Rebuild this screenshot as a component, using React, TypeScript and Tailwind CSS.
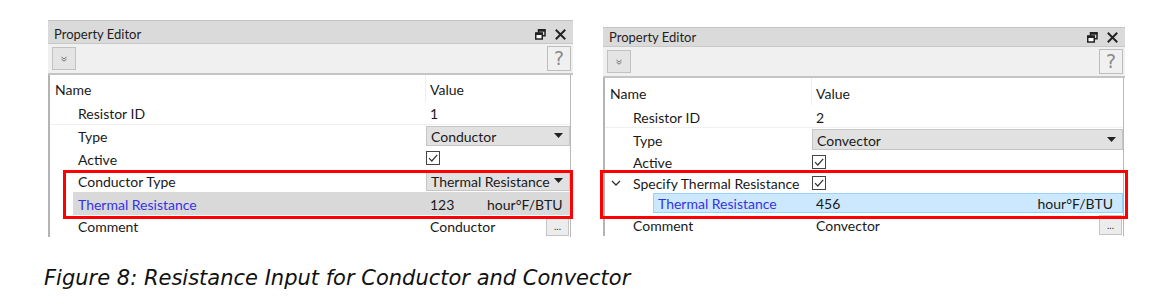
import React from "react";

const font = { fontFamily: "Lato, 'Noto Sans', sans-serif" };

function RestoreIcon() {
  return (
    <svg width="11" height="11" viewBox="0 0 11 11">
      <rect x="3.5" y="0.75" width="6.5" height="6" fill="none" stroke="#222" strokeWidth="1.5" />
      <rect x="3.5" y="0.5" width="7" height="2.2" fill="#222" />
      <rect x="0.75" y="4" width="6.5" height="6" fill="#fff" stroke="#222" strokeWidth="1.5" />
      <rect x="0.5" y="3.8" width="7" height="2.2" fill="#222" />
    </svg>
  );
}

function CloseIcon() {
  return (
    <svg width="11" height="11" viewBox="0 0 11 11">
      <path d="M1.5 1.5 L9.5 9.5 M9.5 1.5 L1.5 9.5" stroke="#222" strokeWidth="2" strokeLinecap="square" />
    </svg>
  );
}

function Check() {
  return (
    <div className="w-[14px] h-[14px] border border-[#444] bg-white flex items-center justify-center">
      <svg width="12" height="12" viewBox="0 0 12 12">
        <path d="M2 6.2 L4.8 9 L10.2 2.8" fill="none" stroke="#333" strokeWidth="1.2" />
      </svg>
    </div>
  );
}

function Combo({ text }: { text: string }) {
  return (
    <div className="flex-1 h-full flex items-center justify-between bg-[#e1e1e1] border border-[#c6c6c6] pl-[4px] pr-[6px] text-[#1a1a1a]">
      <span className="pt-[1px]">{text}</span>
      <svg width="9" height="5" viewBox="0 0 9 5">
        <path d="M0 0 L9 0 L4.5 5 Z" fill="#222" />
      </svg>
    </div>
  );
}

function DotsBtn() {
  return (
    <div className="w-[23px] h-[20px] border border-[#c4c4c4] bg-[#ececec] flex items-end justify-center pb-[4px] text-[10px] leading-none text-[#333]">
      ...
    </div>
  );
}

function TitleBar({ tall }: { tall?: boolean }) {
  return (
    <>
      <div
        className={
          tall
            ? "h-[24px] pt-[5px] bg-[#dadada] border-t border-[#c4c4c4] border-b border-b-[#c8c8c8] flex items-center justify-between pl-[6px] pr-[7px] text-[13px] text-[#1e1e1e]"
            : "h-[20px] bg-[#dadada] border-t border-[#c4c4c4] border-b border-b-[#c8c8c8] flex items-center justify-between pl-[6px] pr-[7px] text-[13px] text-[#1e1e1e]"
        }
      >
        <span className="pt-[1px]">Property Editor</span>
        <div className="flex items-center gap-[9px]">
          <RestoreIcon />
          <CloseIcon />
        </div>
      </div>
      <div className="h-[31px] bg-[#f0f0f0] flex items-center justify-between pl-[4px] pr-[2px] border-b-2 border-[#c4c4c4]">
        <div className="w-[24px] h-[23px] bg-[#e4e4e4] border border-[#c2c2c2] flex items-center justify-center">
          <svg width="6" height="6" viewBox="0 0 6 6">
            <path d="M0.5 1 L3 3 L5.5 1 M0.5 3.2 L3 5.2 L5.5 3.2" fill="none" stroke="#666" strokeWidth="0.9" />
          </svg>
        </div>
        <div
          className="w-[24px] h-[25px] bg-[#f0f0f0] border border-[#bdbdbd] flex items-center justify-center text-[19px] leading-none text-[#8a8a8a]"
          style={{ fontFamily: "'DejaVu Sans', sans-serif" }}
        >
          ?
        </div>
      </div>
    </>
  );
}

function Cell({ w, pl, children }: { w: string; pl: string; children: React.ReactNode }) {
  return <div className={`${w} ${pl} flex items-center pt-[2px]`}>{children}</div>;
}

function LeftPanel() {
  return (
    <div className="w-[525px] relative text-[14px] text-[#1a1a1a]" style={font}>
      <TitleBar tall />
      <div className="flex flex-col border-l-[2px] border-[#b4b4b4] border-r border-r-[#b8b8b8] mr-[2px] bg-white">
        <div className="h-[27px] flex">
          <div className="w-[376px] pl-[5px] pt-[2px] flex items-center border-r border-[#efefef]">Name</div>
          <div className="flex-1 pl-[4px] pt-[2px] flex items-center">Value</div>
        </div>
        <div className="h-[22.5px] flex border-b border-[#f0f0f0]">
          <Cell w="w-[376px]" pl="pl-[28px]">Resistor ID</Cell>
          <div className="flex-1 pl-[4px] pt-[2px] flex items-center">1</div>
        </div>
        <div className="h-[22.5px] flex">
          <Cell w="w-[376px]" pl="pl-[28px]">Type</Cell>
          <div className="flex-1 flex items-center py-[1px]"><Combo text="Conductor" /></div>
        </div>
        <div className="h-[22.5px] flex">
          <Cell w="w-[376px]" pl="pl-[28px]">Active</Cell>
          <div className="flex-1 flex items-center"><Check /></div>
        </div>
        <div className="h-[22.5px] flex">
          <Cell w="w-[376px]" pl="pl-[28px]">Conductor Type</Cell>
          <div className="flex-1 flex items-center py-[1px]"><Combo text="Thermal Resistance" /></div>
        </div>
        <div className="h-[22.5px] flex pl-[23px]">
          <div className="flex-1 flex bg-[#d9d9d9]">
            <div className="w-[353px] pl-[5px] pt-[2px] flex items-center text-[#3434e6]">Thermal Resistance</div>
            <div className="flex-1 pl-[4px] pt-[2px] flex items-center">
              <span className="w-[57px]">123</span>
              <span>hour°F/BTU</span>
            </div>
          </div>
        </div>
        <div className="h-[22.5px] flex">
          <Cell w="w-[376px]" pl="pl-[28px]">Comment</Cell>
          <div className="flex-1 pl-[4px] flex items-center justify-between pr-[1px]">
            <span className="pt-[2px]">Conductor</span>
            <DotsBtn />
          </div>
        </div>
      </div>
      <div className="absolute left-[15px] top-[150px] w-[510px] h-[49px] border-[3px] border-[#ff0000] pointer-events-none" />
    </div>
  );
}

function RightPanel() {
  return (
    <div className="w-[522px] relative text-[14px] text-[#1a1a1a]" style={font}>
      <TitleBar />
      <div className="flex flex-col border-l-[2px] border-[#b4b4b4] border-r border-r-[#b8b8b8] mr-[1px] bg-white">
        <div className="h-[27px] flex">
          <div className="w-[207px] pl-[5px] pt-[3px] flex items-center border-r border-[#efefef]">Name</div>
          <div className="flex-1 pl-[4px] pt-[3px] flex items-center">Value</div>
        </div>
        <div className="h-[23px] flex border-b border-[#f0f0f0]">
          <Cell w="w-[207px]" pl="pl-[28px]">Resistor ID</Cell>
          <div className="flex-1 pl-[4px] pt-[2px] flex items-center">2</div>
        </div>
        <div className="h-[23px] flex">
          <Cell w="w-[207px]" pl="pl-[28px]">Type</Cell>
          <div className="flex-1 flex items-center py-[1px]"><Combo text="Convector" /></div>
        </div>
        <div className="h-[22px] flex">
          <div className="w-[207px] pl-[28px] flex items-center pt-[1px]">Active</div>
          <div className="flex-1 flex items-center"><Check /></div>
        </div>
        <div className="h-[20px] flex">
          <div className="w-[207px] pl-[6px] flex items-center">
            <svg width="10" height="6" viewBox="0 0 10 6" className="mr-[12px]">
              <path d="M1 1 L5 5 L9 1" fill="none" stroke="#333" strokeWidth="1.3" />
            </svg>
            <span>Specify Thermal Resistance</span>
          </div>
          <div className="flex-1 flex items-center"><Check /></div>
        </div>
        <div className="h-[20px] flex pl-[48px]">
          <div className="flex-1 flex bg-[#cce8ff] border border-[#99d1ff]">
            <div className="w-[158px] pl-[4px] pt-[1px] flex items-center text-[#3434e6]">Thermal Resistance</div>
            <div className="flex-1 pl-[4px] pr-[9px] pt-[1px] flex items-center justify-between">
              <span>456</span>
              <span>hour°F/BTU</span>
            </div>
          </div>
        </div>
        <div className="h-[23px] flex">
          <div className="w-[207px] pl-[28px] flex items-center pt-[1px]">Comment</div>
          <div className="flex-1 pl-[4px] flex items-center justify-between pr-[1px]">
            <span className="pt-[1px]">Convector</span>
            <DotsBtn />
          </div>
        </div>
      </div>
      <div className="absolute left-[-3px] top-[143px] w-[528px] h-[49px] border-[3px] border-[#ff0000] pointer-events-none" />
    </div>
  );
}

export default function App() {
  return (
    <div className="w-[1160px] h-[301px] bg-white overflow-hidden">
      <div className="flex items-start pl-[48px] pt-[20px]">
        <LeftPanel />
        <div className="ml-[30px] mt-[7px]">
          <RightPanel />
        </div>
      </div>
      <div
        className="pl-[44px] mt-[31px] text-[21px] leading-[21px] italic text-[#111]"
        style={{ fontFamily: "'DejaVu Sans', Verdana, sans-serif" }}
      >
        Figure 8: Resistance Input for Conductor and Convector
      </div>
    </div>
  );
}
